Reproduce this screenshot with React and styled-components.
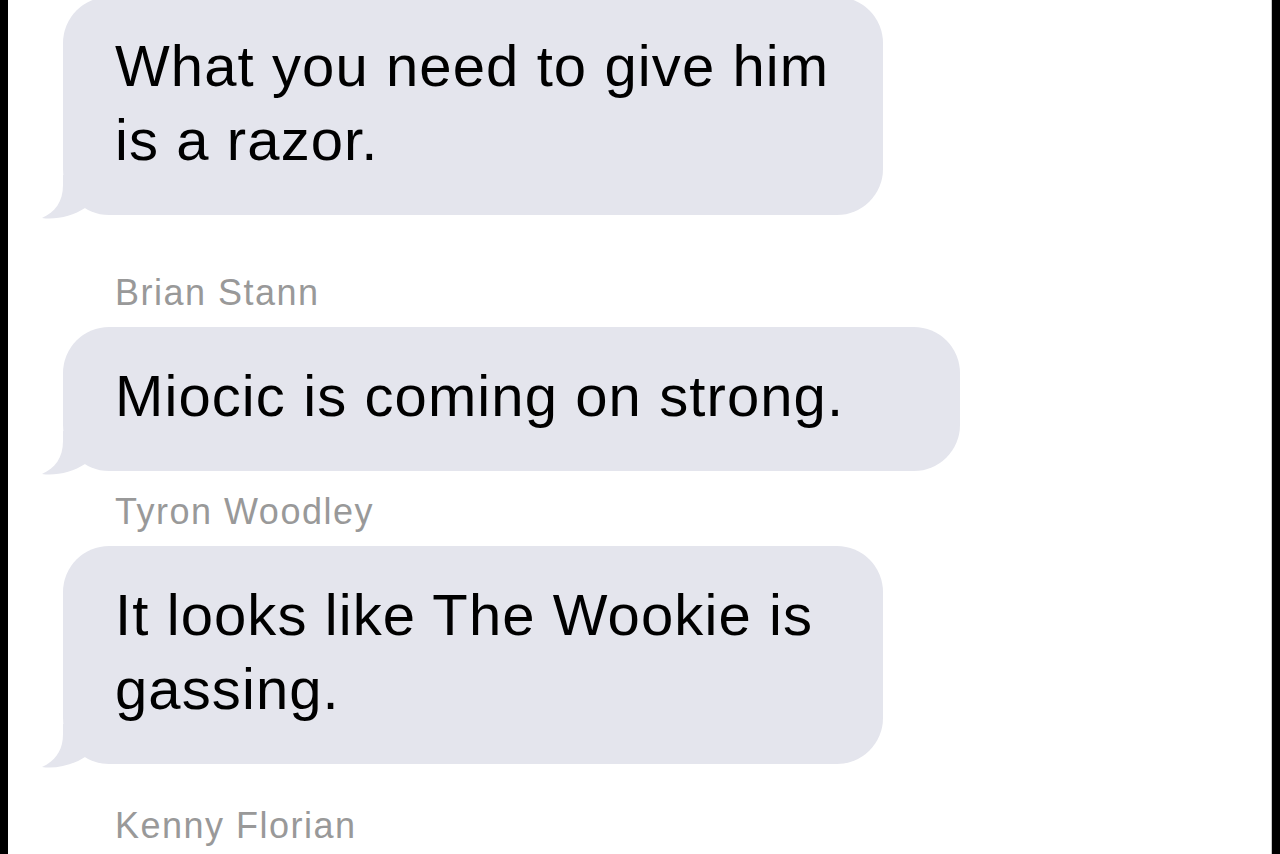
import styled, { createGlobalStyle } from 'styled-components';

const messages = [
  { id: 1, name: null, text: 'What you need to give him is a razor.', width: 820, gap: 0 },
  { id: 2, name: 'Brian Stann', text: 'Miocic is coming on strong.', width: 897, gap: 58 },
  { id: 3, name: 'Tyron Woodley', text: 'It looks like The Wookie is gassing.', width: 820, gap: 21 },
  { id: 4, name: 'Kenny Florian', text: '', width: 820, gap: 42 },
];

function Tail() {
  return (
    <TailSvg width="60" height="45" viewBox="0 0 60 45">
      <path d="M22 0 L22 10 C22 27 14 37 1 43 C15 45 32 41 44 33 L44 0 Z" fill="#e4e5ed" />
    </TailSvg>
  );
}

function Message({ name, text, width, gap }) {
  return (
    <Group $gap={gap}>
      {name && <Sender>{name}</Sender>}
      {text && (
        <Bubble $width={width}>
          {text}
          <Tail />
        </Bubble>
      )}
    </Group>
  );
}

export default function App() {
  return (
    <>
      <GlobalStyle />
      <Frame>
        <Thread>
          {messages.map((m) => (
            <Message key={m.id} {...m} />
          ))}
        </Thread>
      </Frame>
    </>
  );
}

const GlobalStyle = createGlobalStyle`
  html, body {
    margin: 0;
    padding: 0;
    background: #fff;
    overflow: hidden;
  }
`;

const Frame = styled.div`
  box-sizing: border-box;
  width: 1280px;
  height: 854px;
  overflow: hidden;
  background: #fff;
  border-left: 8px solid #000;
  border-right: 8px solid #000;
  box-shadow: inset -1px 0 0 #c8c8c8;
  font-family: "Liberation Sans", Arial, sans-serif;
`;

const Thread = styled.div`
  display: flex;
  flex-direction: column;
  margin-top: -3px;
  padding-left: 55px;
`;

const Group = styled.div`
  display: flex;
  flex-direction: column;
  align-items: flex-start;
  gap: 14px;
  margin-top: ${(p) => p.$gap}px;
`;

const Sender = styled.div`
  padding-left: 52px;
  font-size: 36px;
  line-height: 40px;
  letter-spacing: 1.5px;
  color: #999;
`;

const Bubble = styled.div`
  position: relative;
  box-sizing: border-box;
  width: ${(p) => p.$width}px;
  padding: 32px 40px 38px 52px;
  border-radius: 46px;
  background: #e4e5ed;
  color: #000;
  font-size: 58px;
  line-height: 74px;
  letter-spacing: 1.1px;
`;

const TailSvg = styled.svg`
  position: absolute;
  left: -22px;
  bottom: -5px;
  display: block;
`;
